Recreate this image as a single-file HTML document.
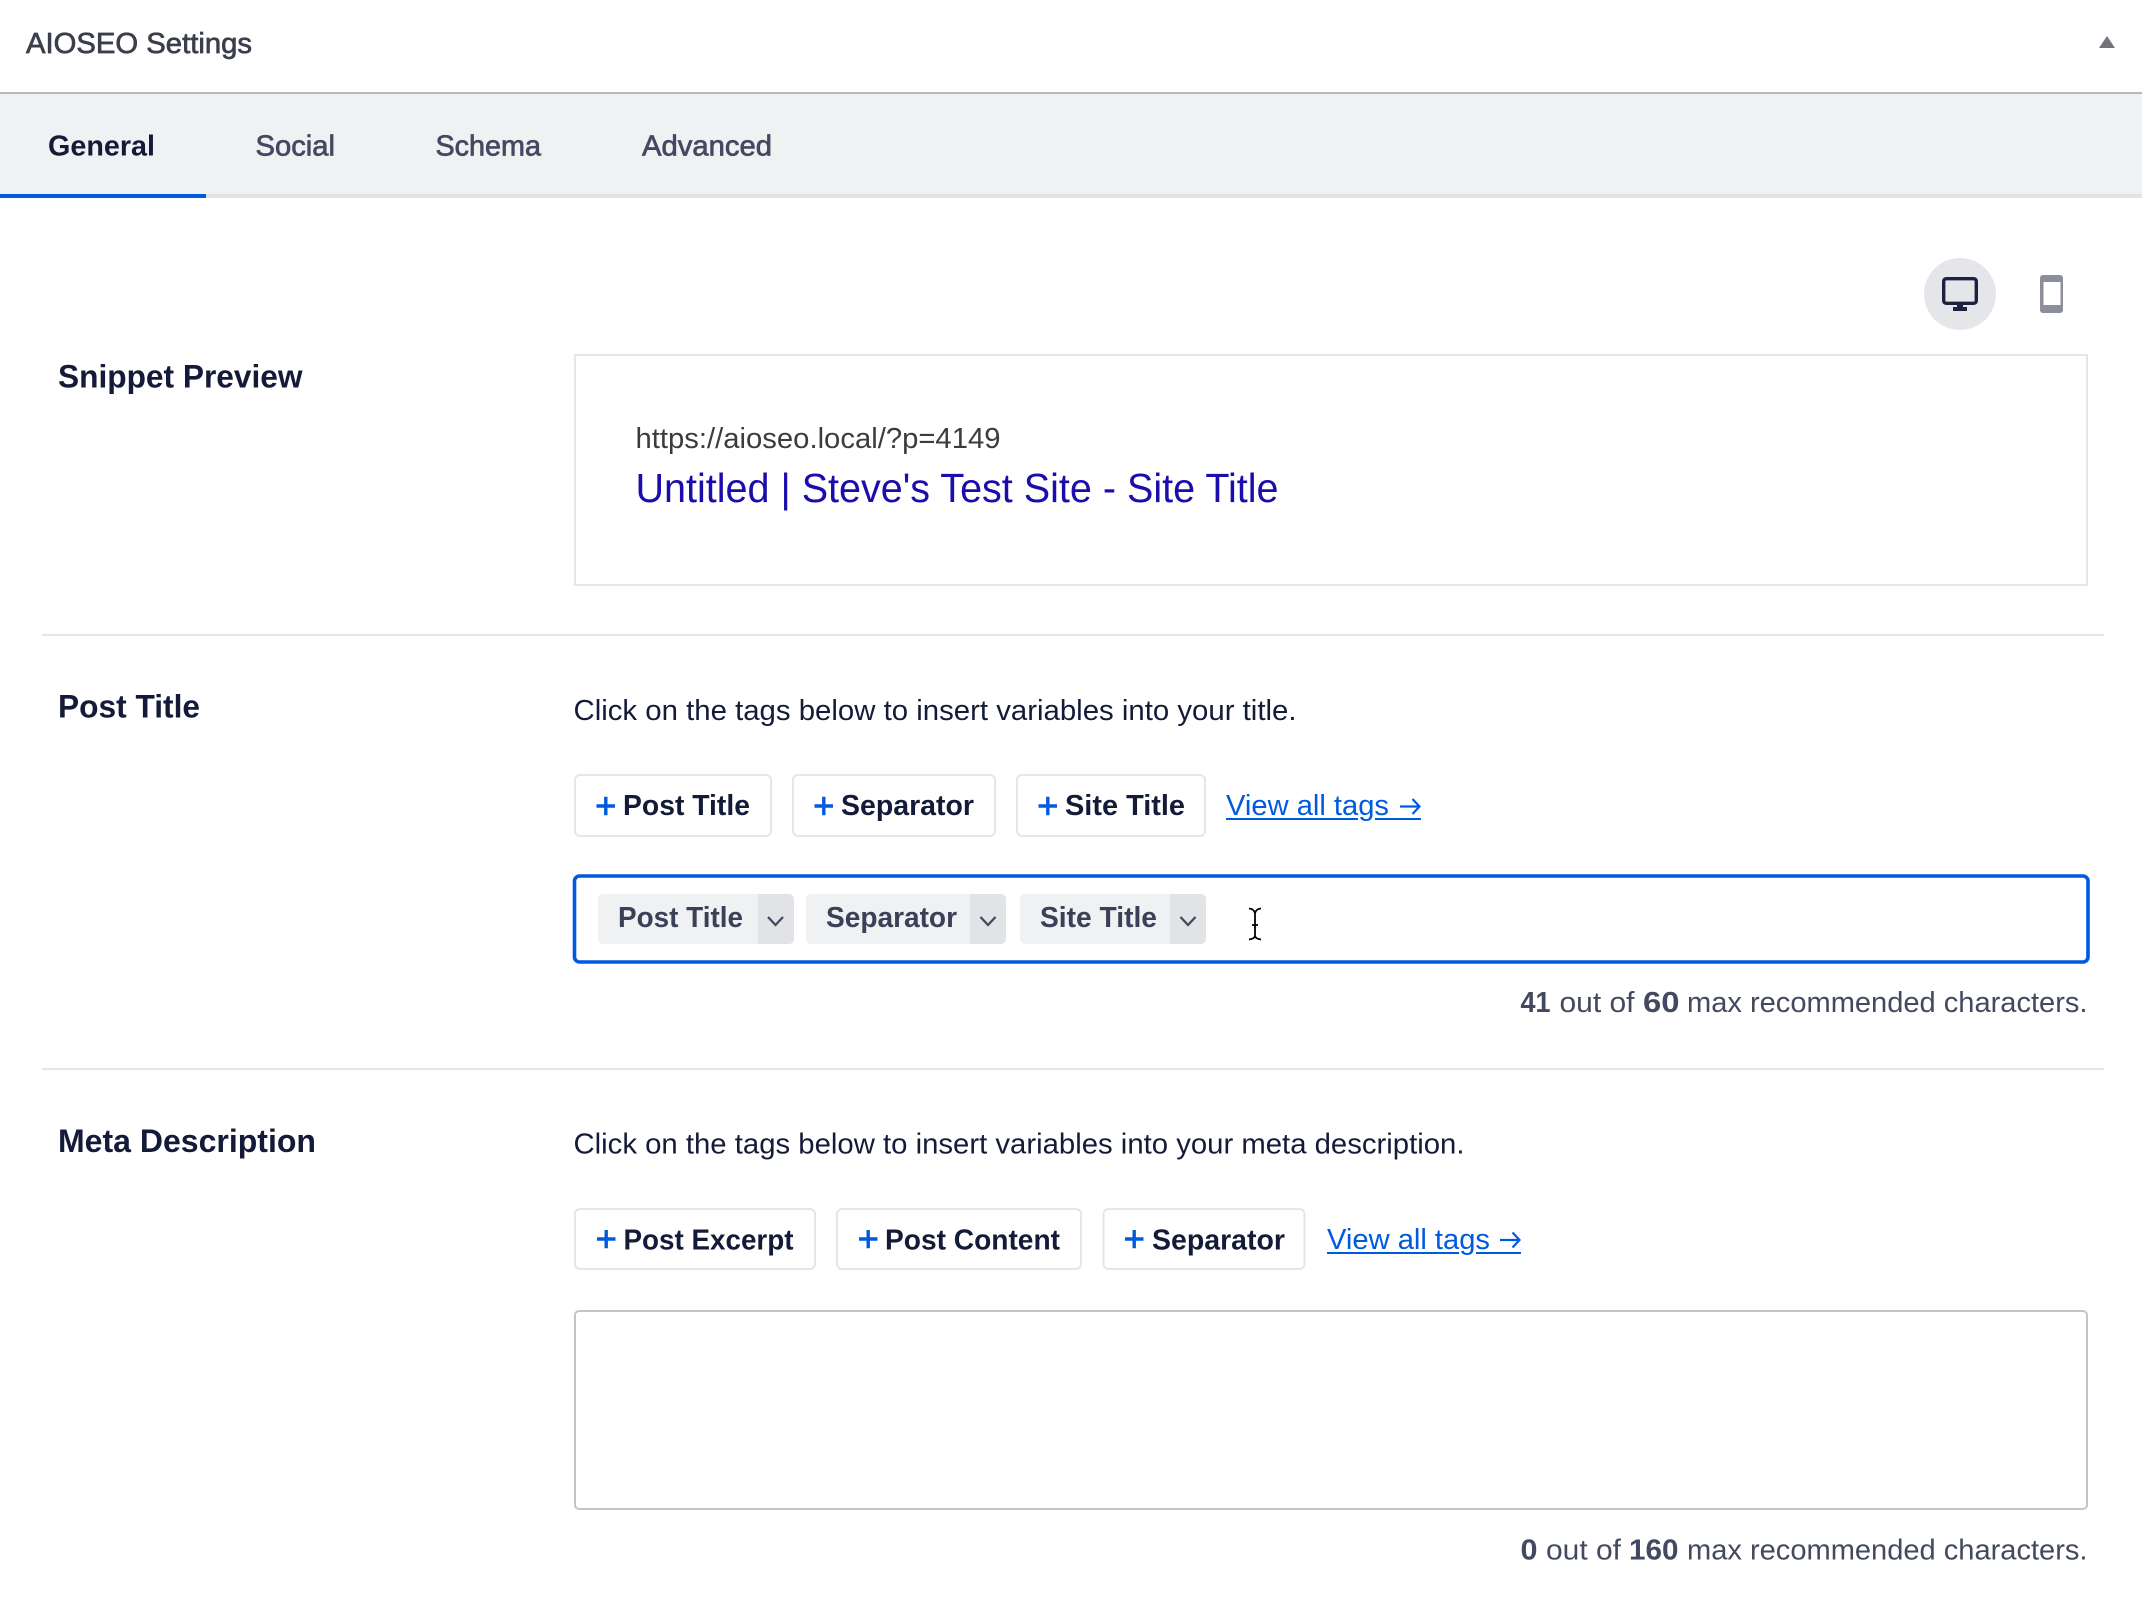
<!DOCTYPE html>
<html lang="en">
<head>
<meta charset="utf-8">
<title>AIOSEO Settings</title>
<style>
html,body{margin:0;padding:0;background:#fff;width:2142px;height:1602px;overflow:hidden}
svg{display:block}
text{font-family:"Liberation Sans",sans-serif;font-size:28.6px;white-space:pre}
.b{font-weight:700}
.m{stroke-width:.7px}
.d{fill:#141b38}
.g{fill:#434960}
.t{fill:#3a4058}
.l{fill:#005ae0}
.h{font-size:32.6px;font-weight:700;fill:#141b38}
.btn{fill:#fff;stroke:#e5e6e9;stroke-width:2}
.tag{fill:#f0f1f3}
.tagd{fill:#e2e3e6}
.chev{fill:none;stroke:#434960;stroke-width:2.3}
.plus{fill:none;stroke:#005ae0;stroke-width:3.4}
</style>
</head>
<body>
<svg width="2142" height="1602" viewBox="0 0 2142 1602" xmlns="http://www.w3.org/2000/svg">
<rect width="2142" height="1602" fill="#fff"/>

<!-- header -->
<text x="26" y="53" textLength="226" lengthAdjust="spacingAndGlyphs" class="m" fill="#3b3e4b" stroke="#3b3e4b">AIOSEO Settings</text>
<path d="M2107 36L2115 48H2099Z" fill="#72747a"/>
<rect x="0" y="92" width="2142" height="2" fill="#b8b9bd"/>

<!-- tabs -->
<rect x="0" y="94" width="2142" height="100" fill="#f0f1f3"/>
<rect x="0" y="194" width="2142" height="4" fill="#e2e3e6"/>
<rect x="0" y="194" width="206" height="4" fill="#005ae0"/>
<text x="48" y="155.500" textLength="107" lengthAdjust="spacingAndGlyphs" class="b d">General</text>
<text x="255.500" y="155.500" textLength="79.500" lengthAdjust="spacingAndGlyphs" class="m g" stroke="#434960">Social</text>
<text x="435.500" y="155.500" textLength="105.500" lengthAdjust="spacingAndGlyphs" class="m g" stroke="#434960">Schema</text>
<text x="642" y="155.500" textLength="130" lengthAdjust="spacingAndGlyphs" class="m g" stroke="#434960">Advanced</text>

<!-- device toggles -->
<circle cx="1960" cy="294" r="36" fill="#e5e6e9"/>
<rect x="1943.700" y="278.700" width="32.600" height="24.600" rx="2.500" fill="none" stroke="#1d2240" stroke-width="3.400"/>
<rect x="1957" y="304" width="6" height="4" fill="#1d2240"/>
<rect x="1953" y="307" width="14" height="4" fill="#1d2240"/>
<rect x="2040" y="275" width="23" height="38" rx="3" fill="#8c8f9a"/>
<rect x="2043.500" y="282" width="17" height="23" fill="#fff"/>

<!-- snippet -->
<text x="58" y="387.500" textLength="244.500" lengthAdjust="spacingAndGlyphs" class="h">Snippet Preview</text>
<rect x="575" y="355" width="1512" height="230" fill="#fff" stroke="#e5e6e9" stroke-width="2"/>
<text x="635.500" y="448" textLength="365" lengthAdjust="spacingAndGlyphs" fill="#3c3c3f">https://aioseo.local/?p=4149</text>
<text x="635.500" y="502" textLength="643" lengthAdjust="spacingAndGlyphs" fill="#1a0dab" style="font-size:41px">Untitled | Steve's Test Site - Site Title</text>
<rect x="42" y="634" width="2062" height="2" fill="#e5e6e9"/>

<!-- post title -->
<text x="58" y="717.500" textLength="142" lengthAdjust="spacingAndGlyphs" class="h">Post Title</text>
<text x="573.500" y="720" textLength="723" lengthAdjust="spacingAndGlyphs" class="d">Click on the tags below to insert variables into your title.</text>

<rect x="575" y="775" width="196" height="61" rx="5" class="btn"/>
<path d="M596.500 806H615M605.800 796.800V815.200" class="plus"/>
<text x="623" y="815" textLength="127" lengthAdjust="spacingAndGlyphs" class="b d">Post Title</text>
<rect x="793" y="775" width="202" height="61" rx="5" class="btn"/>
<path d="M814.500 806H833M823.800 796.800V815.200" class="plus"/>
<text x="841" y="815" textLength="133" lengthAdjust="spacingAndGlyphs" class="b d">Separator</text>
<rect x="1017" y="775" width="188" height="61" rx="5" class="btn"/>
<path d="M1038.500 806H1057M1047.800 796.800V815.200" class="plus"/>
<text x="1065" y="815" textLength="120" lengthAdjust="spacingAndGlyphs" class="b d">Site Title</text>
<text x="1226" y="815" textLength="163" lengthAdjust="spacingAndGlyphs" class="l">View all tags</text>
<path d="M1400 806.500H1419.500M1412.500 799L1419.500 806.500L1412.500 814" fill="none" stroke="#005ae0" stroke-width="2.200"/>
<path d="M1226 819H1358M1375 819H1421" fill="none" stroke="#005ae0" stroke-width="2"/>

<rect x="574.500" y="876" width="1513.500" height="86" rx="5" fill="#fff" stroke="#005ae0" stroke-width="3.600"/>
<rect x="598" y="894" width="196" height="50" rx="5" class="tag"/>
<path d="M758 894H789a5 5 0 0 1 5 5V939a5 5 0 0 1 -5 5H758Z" class="tagd"/>
<path d="M768 917L775.500 925L783 917" class="chev"/>
<text x="618" y="927" textLength="125" lengthAdjust="spacingAndGlyphs" class="b t">Post Title</text>
<rect x="806" y="894" width="200" height="50" rx="5" class="tag"/>
<path d="M970 894H1001a5 5 0 0 1 5 5V939a5 5 0 0 1 -5 5H970Z" class="tagd"/>
<path d="M980.500 917L988 925L995.500 917" class="chev"/>
<text x="826" y="927" textLength="131" lengthAdjust="spacingAndGlyphs" class="b t">Separator</text>
<rect x="1020" y="894" width="186" height="50" rx="5" class="tag"/>
<path d="M1170 894H1201a5 5 0 0 1 5 5V939a5 5 0 0 1 -5 5H1170Z" class="tagd"/>
<path d="M1180.500 917L1188 925L1195.500 917" class="chev"/>
<text x="1040" y="927" textLength="117" lengthAdjust="spacingAndGlyphs" class="b t">Site Title</text>
<path d="M1249 908.500Q1254 909 1255 913V936Q1254 939 1249 939.500M1261 908.500Q1256 909 1255 913M1261 939.500Q1256 939 1255 936M1252 925H1258" fill="none" stroke="#000" stroke-width="1.800"/>

<text x="1520.500" y="1012" textLength="30" lengthAdjust="spacingAndGlyphs" class="b g">41</text>
<text x="1559.500" y="1012" textLength="75" lengthAdjust="spacingAndGlyphs" class="g">out of</text>
<text x="1643" y="1012" textLength="36.500" lengthAdjust="spacingAndGlyphs" class="b g">60</text>
<text x="1687" y="1012" textLength="400.500" lengthAdjust="spacingAndGlyphs" class="g">max recommended characters.</text>
<rect x="42" y="1068" width="2062" height="2" fill="#e5e6e9"/>

<!-- meta description -->
<text x="58" y="1152" textLength="258" lengthAdjust="spacingAndGlyphs" class="h">Meta Description</text>
<text x="573.500" y="1153.500" textLength="891" lengthAdjust="spacingAndGlyphs" class="d">Click on the tags below to insert variables into your meta description.</text>

<rect x="575" y="1209" width="240" height="60" rx="5" class="btn"/>
<path d="M597 1239H615.500M606.200 1230V1248.300" class="plus"/>
<text x="623.500" y="1249.300" textLength="170" lengthAdjust="spacingAndGlyphs" class="b d">Post Excerpt</text>
<rect x="837" y="1209" width="244" height="60" rx="5" class="btn"/>
<path d="M859 1239H877.500M868.200 1230V1248.300" class="plus"/>
<text x="885" y="1249.300" textLength="175" lengthAdjust="spacingAndGlyphs" class="b d">Post Content</text>
<rect x="1103.500" y="1209" width="201" height="60" rx="5" class="btn"/>
<path d="M1125 1239H1143.500M1134.200 1230V1248.300" class="plus"/>
<text x="1152" y="1249.300" textLength="133" lengthAdjust="spacingAndGlyphs" class="b d">Separator</text>
<text x="1327" y="1249" textLength="163" lengthAdjust="spacingAndGlyphs" class="l">View all tags</text>
<path d="M1500 1240H1519.500M1512.500 1232.500L1519.500 1240L1512.500 1247.500" fill="none" stroke="#005ae0" stroke-width="2.200"/>
<path d="M1327 1253H1459M1476 1253H1521" fill="none" stroke="#005ae0" stroke-width="2"/>

<rect x="575" y="1311" width="1512" height="198" rx="4" fill="#fff" stroke="#c3c4ca" stroke-width="2"/>

<text x="1520.500" y="1559.500" textLength="17" lengthAdjust="spacingAndGlyphs" class="b g">0</text>
<text x="1546" y="1559.500" textLength="75" lengthAdjust="spacingAndGlyphs" class="g">out of</text>
<text x="1629" y="1559.500" textLength="49.500" lengthAdjust="spacingAndGlyphs" class="b g">160</text>
<text x="1687" y="1559.500" textLength="400.500" lengthAdjust="spacingAndGlyphs" class="g">max recommended characters.</text>
</svg>
</body>
</html>
